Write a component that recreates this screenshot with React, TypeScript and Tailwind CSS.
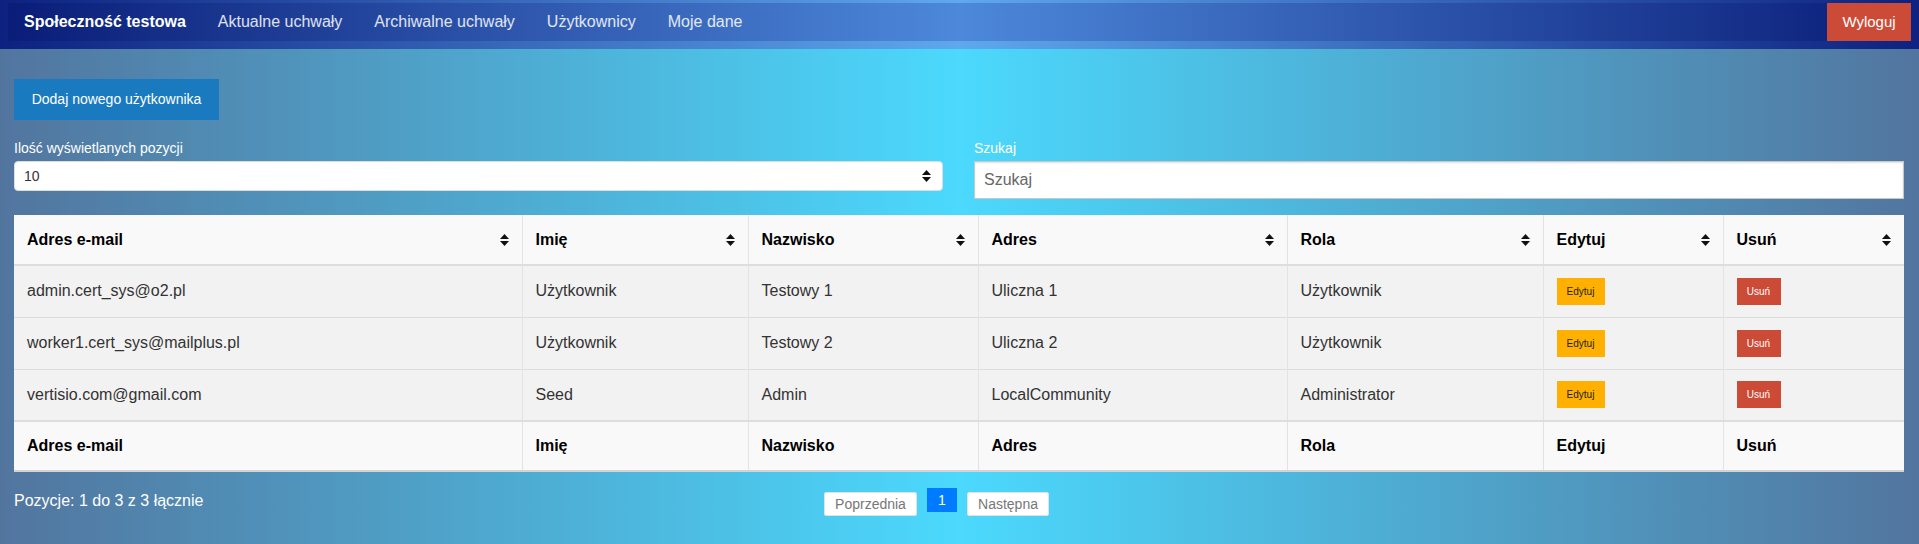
import React from "react";

const FONT = { fontFamily: '"Liberation Sans", Arial, sans-serif' };

const NAV_LINKS = ["Aktualne uchwały", "Archiwalne uchwały", "Użytkownicy", "Moje dane"];

const COLUMNS = [
  { label: "Adres e-mail", width: "w-[508px]" },
  { label: "Imię", width: "w-[226px]" },
  { label: "Nazwisko", width: "w-[230px]" },
  { label: "Adres", width: "w-[309px]" },
  { label: "Rola", width: "w-[256px]" },
  { label: "Edytuj", width: "w-[180px]" },
  { label: "Usuń", width: "w-[181px]" },
];

const USERS = [
  { email: "admin.cert_sys@o2.pl", name: "Użytkownik", surname: "Testowy 1", address: "Uliczna 1", role: "Użytkownik" },
  { email: "worker1.cert_sys@mailplus.pl", name: "Użytkownik", surname: "Testowy 2", address: "Uliczna 2", role: "Użytkownik" },
  { email: "vertisio.com@gmail.com", name: "Seed", surname: "Admin", address: "LocalCommunity", role: "Administrator" },
];

function SortIcon() {
  return (
    <svg width="9" height="12" viewBox="0 0 9 12" className="shrink-0">
      <path d="M4.5 0 L9 5 H0 Z" fill="#111" />
      <path d="M4.5 12 L9 7 H0 Z" fill="#111" />
    </svg>
  );
}

function Navbar() {
  return (
    <div className="h-[49px] pt-[3px] bg-[linear-gradient(to_right,#0d2180,#5ea8ee_50%,#0d2180)]">
      <div className="h-[38px] mx-[8px] flex items-center bg-[linear-gradient(to_right,#0a1d78,#4d88da_50%,#0a1d78)]">
        <span className="px-[16px] text-[16px] font-bold text-white">Społeczność testowa</span>
        {NAV_LINKS.map((l) => (
          <span key={l} className="px-[16px] text-[16px] text-white/85">
            {l}
          </span>
        ))}
        <button className="ml-auto h-full w-[84px] bg-[#cc4b37] text-white text-[15px]">Wyloguj</button>
      </div>
    </div>
  );
}

function HeaderRow({ footer }: { footer?: boolean }) {
  return (
    <tr className="bg-[#f9f9f9]">
      {COLUMNS.map((c, i) => (
        <th
          key={c.label}
          className={`${c.width} h-[50px] px-[13px] text-left font-bold text-[16px] text-black ${
            footer ? "border-t-2 border-t-[#dddddd]" : "border-b-2 border-b-[#dddddd]"
          } ${i > 0 ? "border-l border-l-[#e3e3e3]" : ""}`}
        >
          <div className="flex items-center justify-between">
            <span>{c.label}</span>
            {!footer && <SortIcon />}
          </div>
        </th>
      ))}
    </tr>
  );
}

export default function App() {
  return (
    <div style={FONT} className="w-[1919px] h-[544px] bg-[linear-gradient(to_right,#52759e,#4bd9fd_50%,#52759e)]">
      <Navbar />

      <div className="pl-[14px] pr-[15px] pt-[30px]">
        <button className="h-[41px] w-[205px] bg-[#1a7abf] text-white text-[14px]">Dodaj nowego użytkownika</button>

        <div className="mt-[20px] grid grid-cols-[929px_930px] gap-[31px] items-start">
          <div>
            <div className="text-[14px] leading-[17px] text-white mb-[4px]">Ilość wyświetlanych pozycji</div>
            <div className="h-[30px] bg-white rounded-[4px] border border-[#dcdcdc] flex items-center justify-between pl-[9px] pr-[11px]">
              <span className="text-[14px] text-[#333]">10</span>
              <SortIcon />
            </div>
          </div>
          <div>
            <div className="text-[14px] leading-[17px] text-white mb-[4px]">Szukaj</div>
            <div className="h-[38px] bg-white border border-[#c8c8c8] shadow-[inset_0_1px_2px_rgba(0,0,0,0.12)] flex items-center px-[9px]">
              <span className="text-[16px] text-[#666]">Szukaj</span>
            </div>
          </div>
        </div>

        <table className="mt-[16px] w-[1890px] table-fixed border-collapse bg-white border-b-2 border-b-[#d4d4d4]">
          <thead>
            <HeaderRow />
          </thead>
          <tbody>
            {USERS.map((u) => (
              <tr key={u.email} className="bg-[#f2f2f2] text-[#333] text-[16px]">
                <td className="h-[52px] px-[13px] border-t border-t-[#dddddd]">{u.email}</td>
                <td className="h-[52px] px-[13px] border-t border-t-[#dddddd] border-l border-l-[#e3e3e3]">{u.name}</td>
                <td className="h-[52px] px-[13px] border-t border-t-[#dddddd] border-l border-l-[#e3e3e3]">{u.surname}</td>
                <td className="h-[52px] px-[13px] border-t border-t-[#dddddd] border-l border-l-[#e3e3e3]">{u.address}</td>
                <td className="h-[52px] px-[13px] border-t border-t-[#dddddd] border-l border-l-[#e3e3e3]">{u.role}</td>
                <td className="h-[52px] px-[13px] border-t border-t-[#dddddd] border-l border-l-[#e3e3e3]">
                  <button className="h-[27px] w-[48px] bg-[#ffb000] text-[10px] text-[#222]">Edytuj</button>
                </td>
                <td className="h-[52px] px-[13px] border-t border-t-[#dddddd] border-l border-l-[#e3e3e3]">
                  <button className="h-[27px] w-[44px] bg-[#cc4b37] text-[10px] text-white">Usuń</button>
                </td>
              </tr>
            ))}
          </tbody>
          <tfoot>
            <HeaderRow footer />
          </tfoot>
        </table>

        <div className="mt-[16px] flex items-start">
          <div className="w-[810px] mt-[4px] text-[16px] leading-[18px] text-white">Pozycje: 1 do 3 z 3 łącznie</div>
          <div className="flex items-start gap-[10px]">
            <button className="mt-[4px] h-[24px] w-[93px] bg-white rounded-[2px] border border-[#e2e2e2] text-[14px] text-[#777]">
              Poprzednia
            </button>
            <button className="h-[24px] w-[30px] bg-[#007bff] text-[14px] text-white">1</button>
            <button className="mt-[4px] h-[24px] w-[82px] bg-white rounded-[2px] border border-[#e2e2e2] text-[14px] text-[#777]">
              Następna
            </button>
          </div>
        </div>
      </div>
    </div>
  );
}
